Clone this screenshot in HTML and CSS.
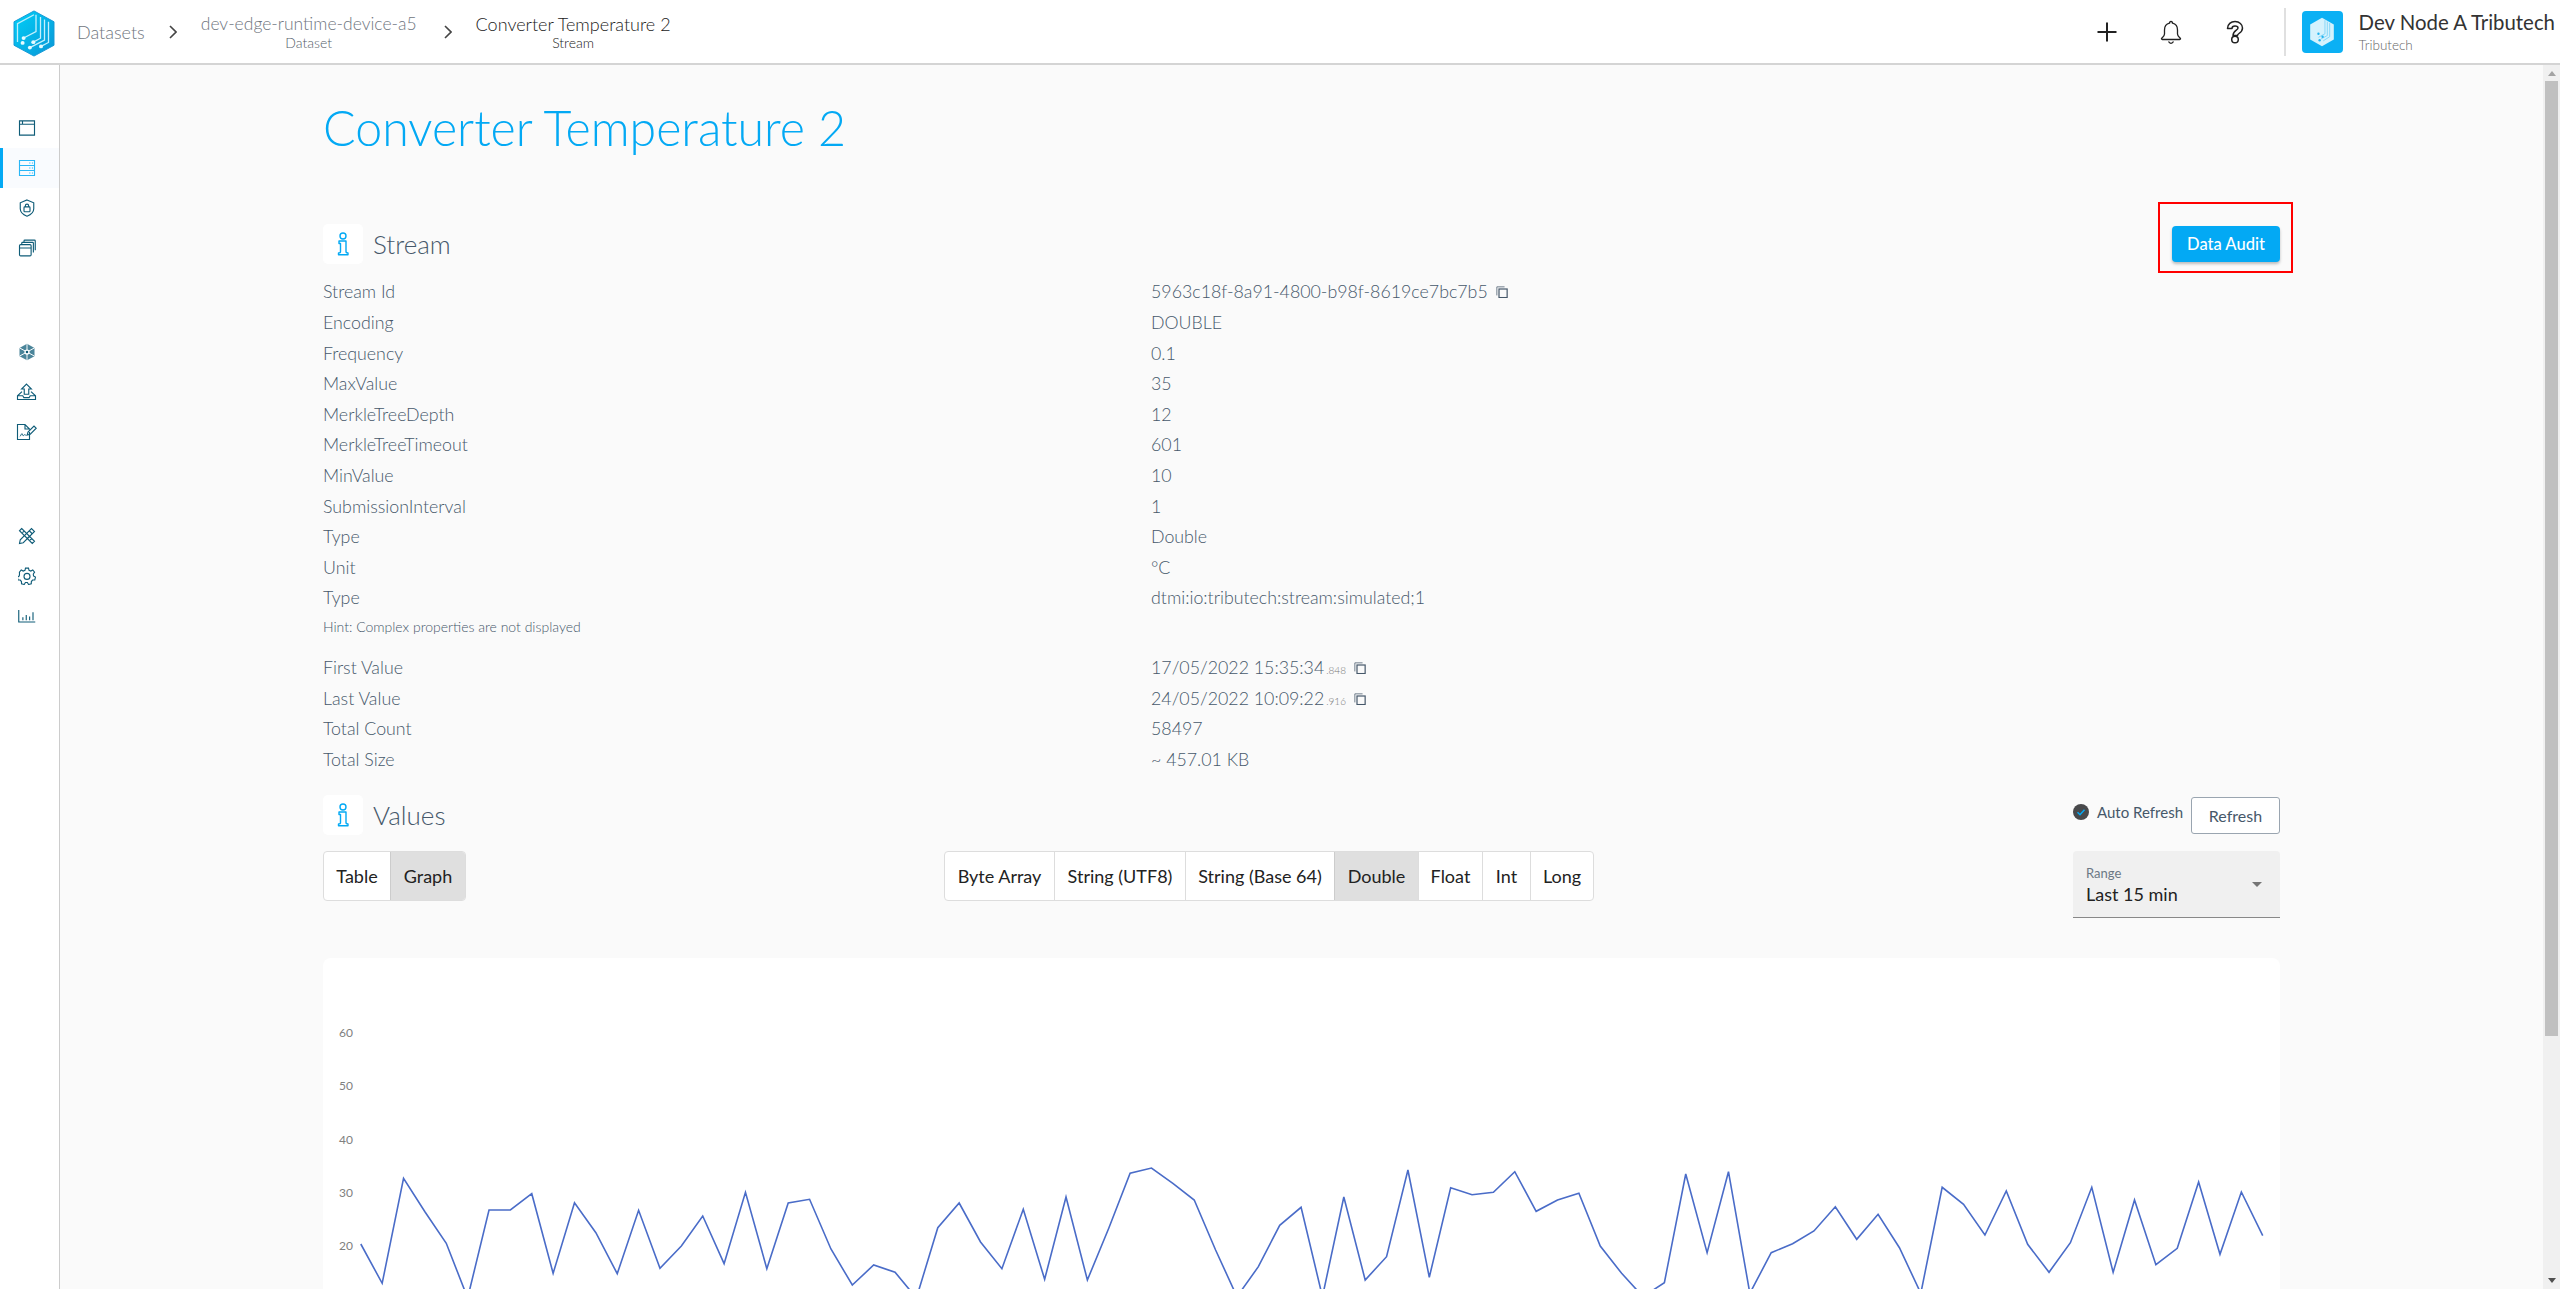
FILE: index.html
```html
<!DOCTYPE html>
<html lang="en">
<head>
<meta charset="utf-8">
<title>Converter Temperature 2</title>
<link rel="stylesheet" href="styles.css">
</head>
<body>
<svg class="defs" width="0" height="0" aria-hidden="true">
  <defs>
    <linearGradient id="hex" x1="0" y1="0" x2="1" y2="1">
      <stop offset="0" stop-color="#00d0f8"/>
      <stop offset="1" stop-color="#0a96d6"/>
    </linearGradient>
  </defs>
</svg>
<header class="topbar">
  <svg class="logo" viewBox="0 0 44 50" preserveAspectRatio="none">
    <path d="M22 1 42 12.5V37.5L22 49 2 37.5V12.5Z" fill="url(#hex)" stroke="#1699d6" stroke-width="1"/>
    <path d="M5.500 34V14.500L22 5" fill="none" stroke="#bdeefc" stroke-width="1.300"/>
    <path d="M11.600 29.800 24 23V5M21.300 34.200 28.500 30V7.500M17.900 40 32.500 32V10M29 38.700 36.500 34.500V12.500" fill="none" stroke="#c5f0fd" stroke-width="1.300"/>
    <circle cx="11.600" cy="29.800" r="2" fill="#e6fbff"/><circle cx="10.600" cy="35" r="2" fill="#e6fbff"/><circle cx="21.300" cy="34.200" r="2" fill="#e6fbff"/><circle cx="17.900" cy="40" r="2" fill="#e6fbff"/><circle cx="29" cy="38.700" r="2" fill="#e6fbff"/>
  </svg>
  <nav class="crumbs">
    <span class="crumb-root">Datasets</span>
    <svg class="chev" viewBox="0 0 8 14"><path d="M1 1l6 6-6 6" fill="none" stroke="#444" stroke-width="1.600"/></svg>
    <span class="crumb"><span class="crumb-main">dev-edge-runtime-device-a5</span><span class="crumb-sub">Dataset</span></span>
    <svg class="chev chev-last" viewBox="0 0 8 14"><path d="M1 1l6 6-6 6" fill="none" stroke="#444" stroke-width="1.600"/></svg>
    <span class="crumb crumb-current"><span class="crumb-main">Converter Temperature 2</span><span class="crumb-sub">Stream</span></span>
  </nav>
  <div class="top-actions">
    <svg class="top-icon" viewBox="0 0 24 24"><path d="M12 2.500v19M2.500 12h19" fill="none" stroke="#222" stroke-width="2"/></svg>
    <svg class="top-icon" viewBox="0 0 24 24"><path d="M12 1.500a1.500 1.500 0 0 1 1.500 1.700C17 4 18.500 7 18.500 10v4c0 2 1.500 3 2.800 4.200.5.600.2 1.300-.6 1.300H3.300c-.8 0-1.100-.7-.6-1.300C4 17 5.500 16 5.500 14v-4c0-3 1.500-6 5-6.800A1.500 1.500 0 0 1 12 1.500ZM9.500 21.500c.6 1.200 1.500 1.800 2.500 1.800s1.900-.6 2.500-1.800" fill="none" stroke="#222" stroke-width="1.300"/></svg>
    <svg class="top-icon" viewBox="0 0 24 24"><path d="M4.500 8.500C4.500 4 8 1.500 12 1.500c4.500 0 7.500 3 7.500 6.500 0 3-2 4.500-3.500 5.500-1.200.8-1.500 1.300-1.500 2H10c0-2.500 1.300-4 3-5.200 1.300-.9 2-1.300 2-2.300C15 6.800 13.800 6 12 6c-1.700 0-3 1-3 2.500Z" fill="none" stroke="#222" stroke-width="1.500" stroke-linejoin="round"/><circle cx="12" cy="19.500" r="3.300" fill="none" stroke="#222" stroke-width="1.500"/></svg>
  </div>
  <div class="account">
    <div class="avatar">
      <svg viewBox="0 0 44 50" class="avatar-logo">
        <path d="M22 1 42 12.500V37.500L22 49 2 37.500V12.500Z" fill="#d5f2fd"/>
        <path d="M27 5V28L16 34M31 7.500V31L20 37M35 10V33L24 40" fill="none" stroke="#7fd4f7" stroke-width="1.500"/>
        <circle cx="16" cy="28" r="2" fill="#22b4f0"/><circle cx="23" cy="33" r="2" fill="#22b4f0"/><circle cx="18" cy="39" r="2" fill="#22b4f0"/>
      </svg>
    </div>
    <div class="account-text">
      <span class="account-name">Dev Node A Tributech</span>
      <span class="account-org">Tributech</span>
    </div>
  </div>
</header>

<div class="shell">
  <aside class="sidebar">
    <div class="side-group">
      <div class="side-item">
        <svg class="side-icon" viewBox="0 0 24 24"><path d="M2 2.500h20v19H2zM2 7h20M6 2.500V7" fill="none" stroke="currentColor" stroke-width="1.500"/></svg>
      </div>
      <div class="side-item is-active">
        <svg class="side-icon" viewBox="0 0 24 24"><path d="M2 2h20v20H2zM2 8.700h20M2 15.300h20" fill="none" stroke="currentColor" stroke-width="1.500"/><path d="M15 5.300h1.500M18.500 5.300H20M15 12h1.500M18.500 12H20M15 18.700h1.500M18.500 18.700H20" stroke="currentColor" stroke-width="1.500"/></svg>
      </div>
      <div class="side-item">
        <svg class="side-icon" viewBox="0 0 24 24"><path d="M12 1.200 21 5v8c0 4.500-4 8-9 10-5-2-9-5.500-9-10V5Z" fill="none" stroke="currentColor" stroke-width="1.500"/><rect x="8" y="10.500" width="8" height="6.500" rx="1" fill="none" stroke="currentColor" stroke-width="1.500"/><path d="M9.800 10.500V9a2.200 2.200 0 0 1 4.400 0v1.500" fill="none" stroke="currentColor" stroke-width="1.500"/></svg>
      </div>
      <div class="side-item">
        <svg class="side-icon" viewBox="0 0 24 24"><rect x="2" y="7.500" width="15.500" height="15" rx="1.500" fill="none" stroke="currentColor" stroke-width="1.500"/><path d="M2 12h15.500M5 7.500V5.500a1 1 0 0 1 1-1h13.500a1 1 0 0 1 1 1V18M8 4.500V2.500a1 1 0 0 1 1-1h13a1 1 0 0 1 1 1V15" fill="none" stroke="currentColor" stroke-width="1.500"/></svg>
      </div>
    </div>
    <div class="side-group">
      <div class="side-item">
        <svg class="side-icon" viewBox="0 0 24 24"><path d="M12 1 22 6.500v11L12 23 2 17.500v-11Z" fill="currentColor" opacity=".75"/><path d="M12 1v22M2 6.500l20 11M22 6.500l-20 11" stroke="#fff" stroke-width="1.300"/><circle cx="12" cy="12" r="3.500" fill="#fff"/><circle cx="12" cy="12" r="1.700" fill="currentColor"/></svg>
      </div>
      <div class="side-item">
        <svg class="side-icon side-icon-wide" viewBox="0 0 28 24"><path d="M14 1.500l6.500 6.500H17v7h-6V8H7.500Z" fill="none" stroke="currentColor" stroke-width="1.500"/><path d="M8 11.500 2 17v5h24v-5l-6-5.500M2 17h7l1.500 2.500h7L19 17h7" fill="none" stroke="currentColor" stroke-width="1.500"/></svg>
      </div>
      <div class="side-item">
        <svg class="side-icon side-icon-wide" viewBox="0 0 28 24"><path d="M18 12v10H2V2h10l6 6v1M12 2v6h6" fill="none" stroke="currentColor" stroke-width="1.500"/><path d="M5 18c1.500-.5 2-4 3-4s.5 3 1.500 3 1-1.500 2-1.500 1 1 2.500 1" fill="none" stroke="currentColor" stroke-width="1.200"/><path d="M15 16l1-4 8-8 3 3-8 8Z" fill="none" stroke="currentColor" stroke-width="1.500"/></svg>
      </div>
    </div>
    <div class="side-group">
      <div class="side-item">
        <svg class="side-icon" viewBox="0 0 24 24"><path d="M2 22l1-5L18 2l4 4L7 21Z" fill="none" stroke="currentColor" stroke-width="1.500"/><path d="M5 2 2 5l17 17 3-3ZM8 5.500 6 7.500M15 12.500l-2 2M18 15.500l-2 2M15 5l4 4" fill="none" stroke="currentColor" stroke-width="1.500"/></svg>
      </div>
      <div class="side-item">
        <svg class="side-icon" viewBox="0 0 24 24"><path d="M12 1.500l2 0 .7 2.900 2.400 1 2.600-1.500 2.400 3-1.700 2.500.3 2.600 2.600 1.500-.9 3.700-3 .2-1.600 2-.1 3-3.600.9-1.600-2.600h-2.600l-1.600 2.600-3.600-.9-.1-3-1.600-2-3-.2-.9-3.700 2.600-1.500.3-2.600L1.900 6.900l2.400-3 2.600 1.500 2.400-1L10 1.500Z" fill="none" stroke="currentColor" stroke-width="1.500"/><circle cx="12" cy="12.500" r="4" fill="none" stroke="currentColor" stroke-width="1.500"/></svg>
      </div>
      <div class="side-item">
        <svg class="side-icon" viewBox="0 0 24 24"><path d="M1 4v16h22M6.500 17.500v-4M11 17.500v-7M15.500 17.500v-5M20 17.500V7" fill="none" stroke="currentColor" stroke-width="1.500"/></svg>
      </div>
    </div>
  </aside>

  <main class="main">
    <h1 class="page-title">Converter Temperature 2</h1>

    <div class="section-head stream-head">
      <span class="icon-box"><svg class="info-icon" viewBox="0 0 14 24"><circle cx="7" cy="4" r="3" fill="none" stroke="#03a9f4" stroke-width="1.400"/><path d="M3 9h7v10.500c0 1 .6 1.500 2 1.500v1.800H2.500V21c1.500 0 2-.5 2-1.500v-8H3Z" fill="none" stroke="#03a9f4" stroke-width="1.400" stroke-linejoin="round"/></svg></span>
      <h2 class="section-title">Stream</h2>
      <span class="audit-wrap"><button class="btn-audit">Data Audit</button><span class="highlight"></span></span>
    </div>

    <dl class="props">
      <div class="prop prop-first"><dt>Stream Id</dt><dd>5963c18f-8a91-4800-b98f-8619ce7bc7b5 <svg class="copy" viewBox="0 0 14 14"><path d="M1 11V1h9" fill="none" stroke="#5a6b7a" stroke-width="1"/><rect x="3.500" y="3.500" width="9.500" height="10" fill="none" stroke="#46586a" stroke-width="1.400"/></svg></dd></div>
      <div class="prop"><dt>Encoding</dt><dd>DOUBLE</dd></div>
      <div class="prop"><dt>Frequency</dt><dd>0.1</dd></div>
      <div class="prop"><dt>MaxValue</dt><dd>35</dd></div>
      <div class="prop"><dt>MerkleTreeDepth</dt><dd>12</dd></div>
      <div class="prop"><dt>MerkleTreeTimeout</dt><dd>601</dd></div>
      <div class="prop"><dt>MinValue</dt><dd>10</dd></div>
      <div class="prop"><dt>SubmissionInterval</dt><dd>1</dd></div>
      <div class="prop"><dt>Type</dt><dd>Double</dd></div>
      <div class="prop"><dt>Unit</dt><dd>°C</dd></div>
      <div class="prop"><dt>Type</dt><dd>dtmi:io:tributech:stream:simulated;1</dd></div>
    </dl>
    <p class="hint">Hint: Complex properties are not displayed</p>
    <dl class="props stats">
      <div class="prop"><dt>First Value</dt><dd>17/05/2022 15:35:34<small>.848</small> <svg class="copy" viewBox="0 0 14 14"><path d="M1 11V1h9" fill="none" stroke="#5a6b7a" stroke-width="1"/><rect x="3.500" y="3.500" width="9.500" height="10" fill="none" stroke="#46586a" stroke-width="1.400"/></svg></dd></div>
      <div class="prop"><dt>Last Value</dt><dd>24/05/2022 10:09:22<small>.916</small> <svg class="copy" viewBox="0 0 14 14"><path d="M1 11V1h9" fill="none" stroke="#5a6b7a" stroke-width="1"/><rect x="3.500" y="3.500" width="9.500" height="10" fill="none" stroke="#46586a" stroke-width="1.400"/></svg></dd></div>
      <div class="prop"><dt>Total Count</dt><dd>58497</dd></div>
      <div class="prop"><dt>Total Size</dt><dd>~ 457.01 KB</dd></div>
    </dl>

    <div class="section-head values-head">
      <span class="icon-box"><svg class="info-icon" viewBox="0 0 14 24"><circle cx="7" cy="4" r="3" fill="none" stroke="#03a9f4" stroke-width="1.400"/><path d="M3 9h7v10.500c0 1 .6 1.500 2 1.500v1.800H2.500V21c1.500 0 2-.5 2-1.500v-8H3Z" fill="none" stroke="#03a9f4" stroke-width="1.400" stroke-linejoin="round"/></svg></span>
      <h2 class="section-title">Values</h2>
      <div class="refresh">
        <span class="check"><svg class="check-mark" viewBox="0 0 16 16"><path d="M4.500 8.200 7 10.700l4.500-5" fill="none" stroke="#03a9f4" stroke-width="1.500"/></svg></span>
        <span class="refresh-label">Auto Refresh</span>
        <button class="btn-refresh">Refresh</button>
      </div>
    </div>

    <div class="controls">
      <div class="toggle">
        <span class="toggle-btn toggle-table">Table</span>
        <span class="toggle-btn toggle-graph is-on">Graph</span>
      </div>
      <div class="toggle toggle-types">
        <span class="toggle-btn w-byte">Byte Array</span>
        <span class="toggle-btn w-utf">String (UTF8)</span>
        <span class="toggle-btn w-b64">String (Base 64)</span>
        <span class="toggle-btn w-double is-on">Double</span>
        <span class="toggle-btn w-float">Float</span>
        <span class="toggle-btn w-int">Int</span>
        <span class="toggle-btn w-long">Long</span>
      </div>
      <div class="range">
        <span class="range-label">Range</span>
        <span class="range-value">Last 15 min</span>
        <span class="range-caret"></span>
      </div>
    </div>

    <section class="chart-card">
      <svg class="chart" width="1957" height="400" viewBox="0 0 1957 400">
        <g class="chart-axis">
          <text x="16" y="79">60</text>
          <text x="16" y="132">50</text>
          <text x="16" y="186">40</text>
          <text x="16" y="239">30</text>
          <text x="16" y="292">20</text>
        </g>
        <polyline class="chart-line" transform="translate(37.8 0) scale(21.37 1)" points="0,286 1,325.3 2,220.3 3,253.7 4,285.3 5,340 6,252 7,252 8,235.7 9,315.3 10,244.7 11,274.7 12,315.7 13,252.3 14,310.3 15,288 16,258 17,305.7 18,234.3 19,310.7 20,245 21,241.3 22,291 23,327 24,307 25,314.3 26,340 27,269.7 28,245 29,284 30,310.7 31,251.3 32,321.3 33,239 34,322 35,270.3 36,215.3 37,210 38,225.3 39,242 40,292 41,338.7 42,308.7 43,267.3 44,249.3 45,338.7 46,239 47,322 48,298.7 49,212 50,319.3 51,229.7 52,236.7 53,234.3 54,213.7 55,253.3 56,242 57,235.3 58,288 59,315.3 60,338.7 61,324.7 62,216 63,294.7 64,213.7 65,335.3 66,294.7 67,285.7 68,273 69,248.7 70,281.3 71,256.3 72,289.7 73,335.3 74,229.3 75,246.3 76,277 77,233 78,286.3 79,314.3 80,284.7 81,229.3 82,314.3 83,242 84,306.7 85,290.3 86,224 87,296.3 88,234 89,277.7"/>
      </svg>
    </section>
  </main>

  <div class="scrollbar">
    <span class="scroll-up"></span>
    <span class="scroll-thumb"></span>
    <span class="scroll-down"></span>
  </div>
</div>
</body>
</html>
```

FILE: styles.css
```css
* { box-sizing: border-box; }
html, body { margin: 0; height: 100%; }
body {
  display: flex;
  flex-direction: column;
  height: 100vh;
  overflow: hidden;
  background: #fafafa;
  color: #46586a;
  font-family: Lato, "Open Sans", sans-serif;
  font-weight: 300;
  font-size: 17.800px;
}
.defs { position: absolute; }

/* top bar */
.topbar {
  flex: none;
  display: flex;
  align-items: center;
  height: 65px;
  padding-left: 12px;
  background: #fff;
  border-bottom: 2px solid #d4d4d4;
}
.logo { width: 44px; height: 47px; flex: none; margin-top: 3px; }
.crumbs { display: flex; align-items: center; margin-left: 21px; }
.crumb-root { font-size: 18px; color: #6f7680; }
.chev { width: 8px; height: 14px; margin: 0 24px; flex: none; }
.chev-last { margin-left: 27px; }
.crumb { display: flex; flex-direction: column; align-items: center; }
.crumb-main { font-size: 17.500px; line-height: 22px; color: #6f7680; }
.crumb-sub { font-size: 14px; line-height: 16px; color: #55606a; }
.crumb-current .crumb-main { font-size: 18px; color: #222; }
.crumb-current .crumb-sub { color: #222; }
.top-actions { display: flex; align-items: center; gap: 40px; margin-left: auto; margin-right: 37px; }
.top-icon { width: 24px; height: 24px; display: block; }
.account {
  display: flex;
  align-items: center;
  gap: 16px;
  height: 48px;
  padding-left: 16px;
  padding-right: 5px;
  border-left: 2px solid #e0e0e0;
}
.avatar {
  width: 41px;
  height: 42px;
  border-radius: 4px;
  background: #0bb0f4;
  display: flex;
  align-items: center;
  justify-content: center;
}
.avatar-logo { width: 26px; height: 30px; }
.account-text { display: flex; flex-direction: column; }
.account-name { font-size: 20.400px; line-height: 26px; color: #333; font-weight: 400; }
.account-org { font-size: 13.500px; line-height: 20px; color: #666; }

/* shell */
.shell { flex: 1; display: flex; min-height: 0; }
.sidebar {
  flex: none;
  width: 60px;
  padding-top: 43px;
  display: flex;
  flex-direction: column;
  gap: 64px;
  background: #fff;
  border-right: 1px solid #ccc;
}
.side-item {
  height: 40px;
  padding-right: 6px;
  display: flex;
  align-items: center;
  justify-content: center;
  color: #0f5c78;
}
.side-item.is-active {
  color: #29b6f6;
  background: #f9fbfe;
  border-left: 3px solid #03a9f4;
  padding-right: 9px;
}
.side-icon { width: 18px; height: 18px; display: block; }
.side-icon-wide { width: 21px; }

/* main */
.main {
  flex: 1;
  min-width: 0;
  overflow: hidden;
  padding: 0 263px;
}
.page-title {
  margin: 28px 0 0;
  font-size: 48.300px;
  line-height: 68px;
  font-weight: 300;
  color: #03a9f4;
}
.section-head { display: flex; align-items: center; height: 40px; }
.stream-head { margin-top: 63px; }
.values-head { margin-top: 21px; }
.icon-box {
  width: 40px;
  height: 40px;
  border-radius: 5px;
  background: #fff;
  display: flex;
  align-items: center;
  justify-content: center;
  flex: none;
}
.info-icon { width: 14px; height: 24px; }
.section-title {
  margin: 0 0 0 10px;
  font-size: 26px;
  font-weight: 300;
  color: #46586a;
}
.audit-wrap { position: relative; margin-left: auto; display: block; }
.btn-audit {
  display: block;
  width: 108px;
  height: 36px;
  border: 0;
  border-radius: 4px;
  background: #03a9f4;
  color: #fff;
  font: 500 16.500px Lato, sans-serif;
  box-shadow: 0 2px 3px rgba(0,0,0,.25);
}
.highlight {
  position: absolute;
  left: -14px;
  top: -24px;
  width: 135px;
  height: 71px;
  border: 2px solid #f00;
}

.props { margin: 11px 0 0; }
.prop { display: flex; height: 30.600px; line-height: 30.600px; }
.prop-first { height: 32px; line-height: 32px; }
.prop dt { width: 828px; flex: none; }
.prop dd { margin: 0; }
.prop small { font-size: 10px; margin-left: 2px; color: #777; }
.copy { width: 12px; height: 12px; margin-left: 3px; }
.hint { margin: 0; height: 27px; line-height: 27px; font-size: 14px; }
.stats { margin-top: 12px; }

/* controls */
.refresh { margin-left: auto; display: flex; align-items: center; }
.check {
  width: 16px;
  height: 16px;
  border-radius: 50%;
  background: #48494b;
  margin-right: 8px;
  margin-top: -6px;
  display: block;
}
.check-mark { display: block; width: 16px; height: 16px; }
.refresh-label { font-size: 15px; font-weight: 400; color: #46586a; margin-top: -6px; }
.btn-refresh {
  width: 89px;
  height: 37px;
  margin-left: 8px;
  border: 1px solid #9aa5b0;
  border-radius: 3px;
  background: #fff;
  color: #46586a;
  font: 400 16px Lato, sans-serif;
}
.controls {
  display: flex;
  align-items: flex-start;
  justify-content: space-between;
  margin-top: 16px;
}
.toggle {
  display: flex;
  height: 50px;
  border: 1px solid #ddd;
  border-radius: 4px;
  background: #fff;
  overflow: hidden;
}
.toggle-types { margin-right: 1px; }
.toggle-btn {
  display: flex;
  align-items: center;
  justify-content: center;
  font-size: 18px;
  font-weight: 400;
  color: #222;
  border-left: 1px solid #ddd;
}
.toggle-btn:first-child { border-left: 0; }
.toggle-btn.is-on { background: #dfdfdf; border-left-color: #ccc; }
.toggle-table { width: 66px; }
.toggle-graph { width: 75px; }
.w-byte { width: 109px; }
.w-utf { width: 131px; }
.w-b64 { width: 149px; }
.w-double { width: 84px; }
.w-float { width: 64px; }
.w-int { width: 48px; }
.w-long { width: 63px; }
.range {
  position: relative;
  width: 207px;
  height: 67px;
  padding: 15px 13px 0;
  background: #f0f0f0;
  border-bottom: 1px solid #888;
  border-radius: 4px 4px 0 0;
  display: flex;
  flex-direction: column;
}
.range-label { font-size: 13px; line-height: 15px; font-weight: 400; color: #6b7885; }
.range-value { font-size: 18px; line-height: 27px; font-weight: 400; color: #222; }
.range-caret {
  position: absolute;
  right: 18px;
  top: 31px;
  width: 0;
  height: 0;
  border-left: 5px solid transparent;
  border-right: 5px solid transparent;
  border-top: 5px solid #757575;
}

/* chart */
.chart-card {
  height: 400px;
  margin-top: 40px;
  background: #fff;
  border-radius: 8px;
}
.chart { display: block; }
.chart-axis text { font-size: 12px; font-weight: 400; fill: #808080; font-family: Lato, sans-serif; }
.chart-line { fill: none; stroke: #4a6cc8; stroke-width: 1.600; vector-effect: non-scaling-stroke; }

/* scrollbar */
.scrollbar {
  flex: none;
  width: 17px;
  background: #f0f0f0;
  display: flex;
  flex-direction: column;
  align-items: center;
  padding: 6px 0;
}
.scroll-up {
  width: 0;
  height: 0;
  border-left: 4px solid transparent;
  border-right: 4px solid transparent;
  border-bottom: 5px solid #a3a3a3;
}
.scroll-thumb { width: 13px; height: 955px; margin-top: 5px; background: #c0c0c0; }
.scroll-down {
  width: 0;
  height: 0;
  margin-top: auto;
  border-left: 4px solid transparent;
  border-right: 4px solid transparent;
  border-top: 5px solid #505050;
}
```
